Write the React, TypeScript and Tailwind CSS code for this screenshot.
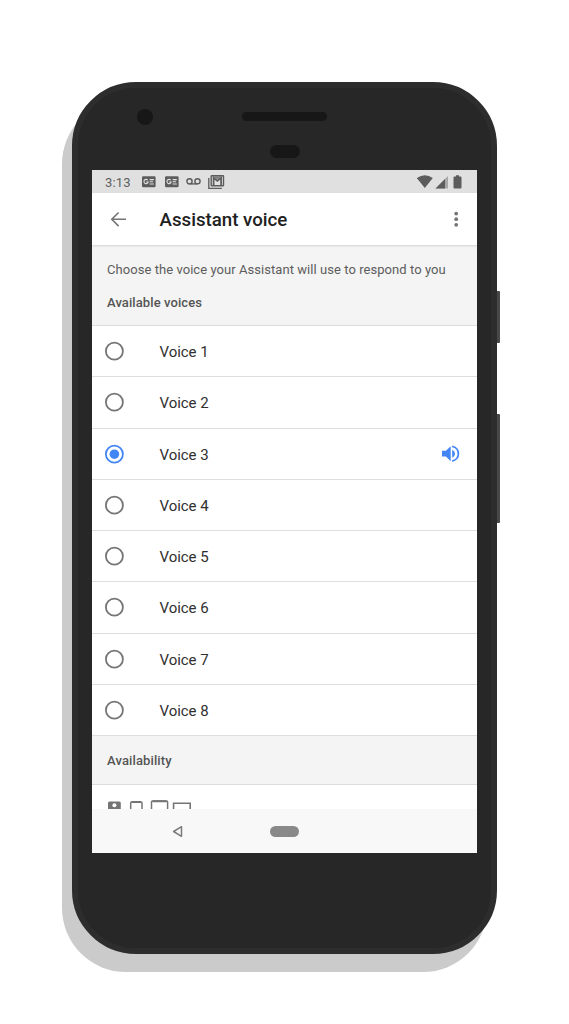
import React from "react";

const voices = [1, 2, 3, 4, 5, 6, 7, 8];
const selectedVoice = 3;

function NewsIcon() {
  return (
    <svg width="14" height="12" viewBox="0 0 14 12">
      <rect width="13.6" height="11" y="0.3" rx="1.2" fill="#5c5c5c" />
      <path d="M5.7 4.2A2.1 2.1 0 1 0 6.100 6H4.200" fill="none" stroke="#e0e0e0" strokeWidth="1.100" />
      <path d="M7.600 3.600h4.200M7.600 5.800h3.400M7.600 8h4.200" stroke="#e0e0e0" strokeWidth="1.100" />
    </svg>
  );
}

function StatusBar() {
  return (
    <div className="flex h-[23px] shrink-0 items-center bg-[#e0e0e0] pl-[13px] pr-[15px]">
      <span className="mt-[1px] w-[37px] text-[13px] leading-none tracking-[0.2px] text-[#606060]">3:13</span>
      <NewsIcon />
      <span className="ml-[9px]"><NewsIcon /></span>
      <svg className="ml-[7px]" width="15" height="9" viewBox="0 0 15 9" fill="none" stroke="#5c5c5c" strokeWidth="1.4">
        <circle cx="3.500" cy="4.300" r="2.600" />
        <circle cx="11.500" cy="4.300" r="2.600" />
        <path d="M3.500 6.900h8" />
      </svg>
      <svg className="ml-[7px]" width="17" height="14" viewBox="0 0 17 14">
        <path d="M.8 3v10.300h13" fill="none" stroke="#5c5c5c" strokeWidth="1.300" />
        <rect x="3.200" y=".8" width="12.300" height="9.900" rx=".5" fill="#e0e0e0" stroke="#5c5c5c" strokeWidth="1.400" />
        <path d="M4.200 1h10.300L9.350 4.600z" fill="#828282" />
        <path d="M5.600 10.500V2.800l3.750 3.200 3.750-3.200v7.700" fill="none" stroke="#5c5c5c" strokeWidth="1.700" />
      </svg>
      <svg className="ml-auto" width="45" height="14" viewBox="0 0 45 14">
        <path d="M-.2 3.100Q7.800 -2.500 15.800 3.100L7.800 13Z" fill="#5c5c5c" />
        <path d="M18.500 13.500 31 1v12.500Z" fill="#a8a8a8" />
        <path d="M18.500 13.500 28 4v9.500Z" fill="#5c5c5c" />
        <path d="M36.500 2.500q0-1 1-1h1.500V.2h3v1.300h1.500q1 0 1 1v10q0 1-1 1h-6q-1 0-1-1Z" fill="#5c5c5c" />
      </svg>
    </div>
  );
}

function Toolbar() {
  return (
    <header className="z-10 flex h-[52px] shrink-0 items-center bg-white pl-[18px] pr-[18px] shadow-[0_1px_2px_rgba(0,0,0,0.14)]">
      <svg width="17" height="16" viewBox="0 0 17 16" fill="none" stroke="#757575" strokeWidth="1.6">
        <path d="M16 8.300H2M8.600 1.500 1.800 8.300l6.800 6.800" />
      </svg>
      <h1 className="ml-[32.5px] mt-[2px] text-[18.7px] font-medium leading-6 text-[#212121]">Assistant voice</h1>
      <svg className="ml-auto" width="5" height="16" viewBox="0 0 5 16" fill="#757575">
        <circle cx="2.200" cy="2.600" r="1.900" />
        <circle cx="2.200" cy="8.200" r="1.900" />
        <circle cx="2.200" cy="13.800" r="1.900" />
      </svg>
    </header>
  );
}

function SpeakerIcon() {
  return (
    <svg className="ml-auto" width="18" height="17" viewBox="0 0 18 17">
      <path d="M0 5.800h3.900L8.700 1.200v15l-4.800-4.600H0z" fill="#4285f4" />
      <path d="M10.200 4.700q2.800 1.300 2.800 4t-2.800 4z" fill="#4285f4" />
      <path d="M10.200 1.400a7.400 7.400 0 0 1 0 14.600" fill="none" stroke="#4285f4" strokeWidth="1.800" />
    </svg>
  );
}

function VoiceRow({ voice }: { voice: number }) {
  const selected = voice === selectedVoice;
  const color = selected ? "#4285f4" : "#757575";
  return (
    <li className="flex h-[51.25px] items-center border-b border-[#dedede] bg-white pl-[13px] pr-[17px]">
      <svg width="19" height="20" viewBox="0 0 19 20">
        <circle cx="9.400" cy="10.200" r="8.500" fill="none" stroke={color} strokeWidth="1.800" />
        {selected && <circle cx="9.400" cy="10.200" r="4.800" fill={color} />}
      </svg>
      <span className="ml-[35.5px] mt-[2px] text-[15px] leading-5 tracking-[-0.04px] text-[#303030]">Voice {voice}</span>
      {selected && <SpeakerIcon />}
    </li>
  );
}

function DeviceIcons() {
  return (
    <div className="flex h-[24px] shrink-0 overflow-hidden bg-white pl-[16px]">
      <svg width="84" height="24" viewBox="0.4 0 84 24" fill="none" stroke="#757575">
        <path d="M0.400 24v-6q0-1.500 1.500-1.500h9.800q1.500 0 1.500 1.500v6" fill="#757575" stroke="none" />
        <circle cx="6.800" cy="20.300" r="2" fill="#fff" stroke="none" />
        <path d="M23.100 25v-7q0-1 1-1h9.300q1 0 1 1v7" strokeWidth="1.500" />
        <path d="M24 17h9.500M45 16.200h14" strokeWidth="2" />
        <path d="M43.900 25v-8q0-1 1-1h14.100q1 0 1 1v8" strokeWidth="1.500" />
        <path d="M66 25v-6.700h16.600v6.700" strokeWidth="1.600" />
      </svg>
    </div>
  );
}

function NavigationBar() {
  return (
    <nav className="flex h-[44px] shrink-0 items-center bg-[#f8f8f8] pl-[80px]">
      <svg width="11" height="13" viewBox="0 0 11 13" fill="none" stroke="#7a7a7a" strokeWidth="1.500">
        <path d="M9.500 1.700v9.600L1.600 6.500z" strokeLinejoin="round" />
      </svg>
      <div className="ml-[87px] h-[11px] w-[29px] rounded-full bg-[#898989]" />
    </nav>
  );
}

function Phone({ children }: { children: React.ReactNode }) {
  return (
    <div className="relative h-[872px] w-[425px] rounded-[64px] border-[6px] border-[#2d2d2d] bg-[#272727] px-[14px] shadow-[-10px_18px_0_0_#cbcbcb]">
      <div className="absolute -right-[9px] top-[203px] h-[52px] w-[3px] rounded-r-[1px] bg-[#484848]" />
      <div className="absolute -right-[9px] top-[326px] h-[109px] w-[3px] rounded-r-[1px] bg-[#484848]" />
      <div className="absolute left-[58.5px] top-[20.5px] size-[16px] rounded-full bg-[#171717]" />
      <div className="flex h-[82px] flex-col items-center pt-[24px]">
        <div className="h-[9px] w-[85px] rounded-full bg-[#171717]" />
        <div className="mt-[24px] h-[13px] w-[30px] rounded-full bg-[#171717]" />
      </div>
      {children}
    </div>
  );
}

export default function App() {
  return (
    <main className="h-[1024px] w-[569px] overflow-hidden bg-white pl-[72px] pt-[82px] font-['Roboto',sans-serif]">
      <Phone>
        <div className="flex h-[683px] w-[385px] flex-col overflow-hidden bg-white">
          <StatusBar />
          <Toolbar />
          <section className="h-[81px] shrink-0 border-b border-[#dcdcdc] bg-[#f4f4f4] pl-[15px] pt-[15px]">
            <p className="text-[13px] leading-5 tracking-[0.055px] text-[#5c5c5c]">Choose the voice your Assistant will use to respond to you</p>
            <h2 className="mt-[13px] text-[13px] font-medium leading-5 tracking-[0.09px] text-[#555555]">Available voices</h2>
          </section>
          <ul className="shrink-0">
            {voices.map((voice) => <VoiceRow key={voice} voice={voice} />)}
          </ul>
          <section className="flex h-[49px] shrink-0 items-center border-b border-[#dcdcdc] bg-[#f4f4f4] pl-[15px]">
            <h2 className="mt-[2px] text-[13px] font-medium leading-5 tracking-[0.12px] text-[#555555]">Availability</h2>
          </section>
          <DeviceIcons />
          <NavigationBar />
        </div>
      </Phone>
    </main>
  );
}
